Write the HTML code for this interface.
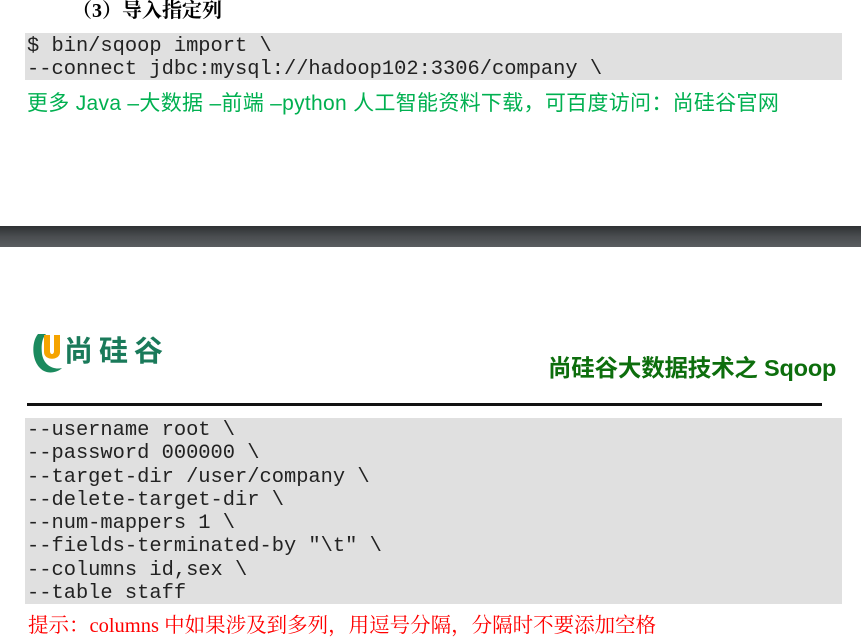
<!DOCTYPE html>
<html><head><meta charset="utf-8"><style>
html,body{margin:0;padding:0;background:#fff;width:861px;height:639px;overflow:hidden;position:relative}
.a{position:absolute;white-space:nowrap}
.code{position:absolute;left:25px;width:817px;background:#e0e0e0}
.mono{font-family:"Liberation Mono",monospace;font-size:20.4px;color:#222;line-height:23.3px;position:absolute;left:27px;white-space:pre}
.cjk{font-family:"Liberation Sans","Noto Sans CJK SC",sans-serif}
</style></head><body>
<div class="a" style="left:72px;top:0px;font-family:'Liberation Serif','Noto Serif CJK SC',serif;font-weight:bold;font-size:20px;line-height:22px;color:#000">（3）导入指定列</div>
<div class="code" style="top:33px;height:47px"></div>
<div class="mono" style="top:35px">$ bin/sqoop import \
--connect jdbc:mysql://hadoop102:3306/company \</div>
<div class="a cjk" style="left:27px;top:90px;font-size:21px;line-height:28px;color:#00b050;letter-spacing:0.3px">更多 Java –大数据 –前端 –python 人工智能资料下载，可百度访问：尚硅谷官网</div>

<div class="a" style="left:0;top:226px;width:861px;height:21px;background:linear-gradient(#2e3133,#4a4d50 50%,#5a5d60)"></div>

<svg class="a" style="left:32px;top:332px" width="32" height="42" viewBox="0 0 32 42">
<path d="M6 2 C-1 10,-1 32,12 39 C18 42,26 40,30 36 C22 38,12 34,10 22 C9 14,10 6,14 2 Z" fill="#1b8a5e"/>
<path d="M12 3 h6 v16 c0 4 4 4 4 0 v-16 h6 v17 c0 9 -16 9 -16 0 z" fill="#f5a400"/>
</svg>
<div class="a cjk" style="left:64px;top:336px;font-size:29px;line-height:32px;color:#1a7a5a;font-weight:bold;letter-spacing:6px">尚硅谷</div>
<div class="a cjk" style="left:548px;top:353px;font-size:23.5px;line-height:30px;color:#0d6e0d;font-weight:bold;letter-spacing:-0.2px">尚硅谷大数据技术之 Sqoop</div>
<div class="a" style="left:27px;top:403px;width:795px;height:3px;background:#111"></div>

<div class="code" style="top:418px;height:186px"></div>
<div class="mono" style="top:419px">--username root \
--password 000000 \
--target-dir /user/company \
--delete-target-dir \
--num-mappers 1 \
--fields-terminated-by "\t" \
--columns id,sex \
--table staff</div>
<div class="a" style="left:28px;top:613px;font-family:'Liberation Serif','Noto Serif CJK SC',serif;font-size:20.5px;line-height:26px;color:#ff0000">提示：columns 中如果涉及到多列，用逗号分隔，分隔时不要添加空格</div>
</body></html>
